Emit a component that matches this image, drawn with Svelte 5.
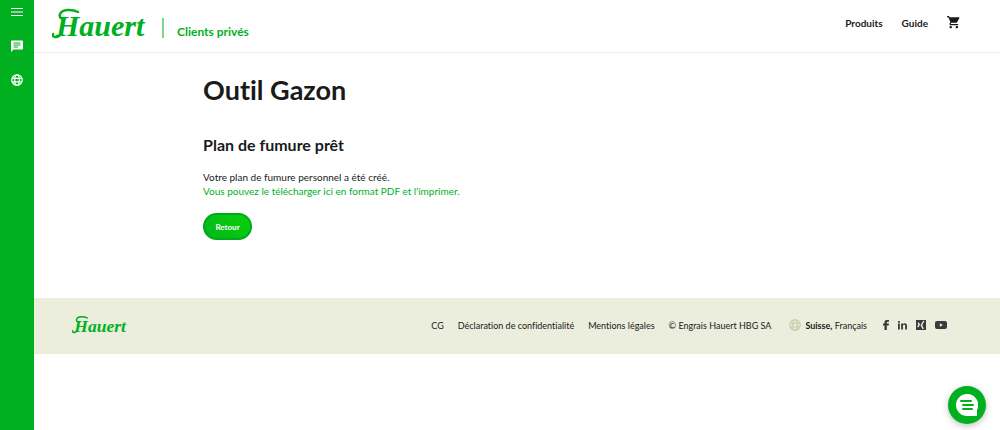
<script lang="ts">
  const footerLinks = ['CG', 'Déclaration de confidentialité', 'Mentions légales'];
</script>

{#snippet logo()}
  <svg viewBox="0 0 96 36" role="img" aria-label="Hauert">
    <text x="4" y="29" class="wordmark">Hauert</text>
    <path d="M26 5C20 2 10 2 8 7c-1 3 1 5 4 5M7 29c-3 2-7 1-6-2" fill="none" stroke="currentColor" stroke-width="2.500" stroke-linecap="round" />
  </svg>
{/snippet}

{#snippet globe()}
  <svg viewBox="0 0 24 24" aria-hidden="true" fill="none" stroke="currentColor" stroke-width="2.500">
    <circle cx="12" cy="12" r="10.5" />
    <ellipse cx="12" cy="12" rx="4.5" ry="10.5" />
    <path d="M2.500 8.500h19M2.500 15.500h19" />
  </svg>
{/snippet}

<div class="page">
  <aside class="sidebar">
    <button aria-label="Menu">
      <svg viewBox="0 0 12 12" fill="currentColor"><path d="M0 2h12v1H0zM0 5.500h12v1H0zM0 9h12v1H0z" /></svg>
    </button>
    <button aria-label="Messages">
      <svg viewBox="0 0 24 24" fill="currentColor"><path fill-rule="evenodd" d="M2 1h20c1 0 2 1 2 2v14c0 1-1 2-2 2H5l-5 5V3c0-1 1-2 2-2zm3 4v2h14V5zm0 4v2h14V9zm0 4v2h9v-2z" /></svg>
    </button>
    <button aria-label="Langue">{@render globe()}</button>
  </aside>

  <div class="main">
    <header>
      <a href="/" class="logo">{@render logo()}</a>
      <a href="/prives" class="segment">Clients privés</a>
      <nav>
        <a href="/produits">Produits</a>
        <a href="/guide">Guide</a>
        <a href="/panier" class="cart" aria-label="Panier">
          <svg viewBox="1 2 21 20" fill="currentColor"><path d="M7 18c-1.100 0-2 .9-2 2s.9 2 2 2 2-.9 2-2-.9-2-2-2zM1 2v2h2l3.600 7.600-1.350 2.450C4.520 15.370 5.480 17 7 17h12v-2H7.420c-.14 0-.25-.11-.25-.25l.03-.12.900-1.630h7.450c.75 0 1.410-.41 1.750-1.030l3.580-6.490A1 1 0 0 0 20 4H5.210l-.94-2H1zm16 16c-1.100 0-2 .9-2 2s.9 2 2 2 2-.9 2-2-.9-2-2-2z" /></svg>
        </a>
      </nav>
    </header>

    <main>
      <h1>Outil Gazon</h1>
      <h2>Plan de fumure prêt</h2>
      <p>
        Votre plan de fumure personnel a été créé.<br />
        <a href="/plan.pdf">Vous pouvez le télécharger ici en format PDF et l'imprimer.</a>
      </p>
      <button class="back">Retour</button>
    </main>

    <footer>
      <a href="/" class="logo small">{@render logo()}</a>
      <div class="links">
        {#each footerLinks as link}
          <a href="/info">{link}</a>
        {/each}
        <span>© Engrais Hauert HBG SA</span>
      </div>
      <a href="/langue" class="language">{@render globe()}<span><b>Suisse,</b> Français</span></a>
      <div class="social">
        <a href="/facebook" aria-label="Facebook">
          <svg width="6" height="10" viewBox="0 0 6 10" fill="currentColor"><path d="M1.500 10V5.500H0v-2h1.500V2.300C1.500.8 2.300 0 3.800 0H6v1.800H4.600c-.6 0-.8.3-.8.8v.9H6l-.3 2H3.800V10z" /></svg>
        </a>
        <a href="/linkedin" aria-label="LinkedIn">
          <svg width="9" height="10" viewBox="0 0 10 10" fill="currentColor"><path d="M0 3.300h2V10H0zM0 .6h2v1.800H0zM3.500 3.300h2v.9c.4-.7 1.100-1.100 2-1.100C9.300 3.100 10 4.300 10 6v4H8V6.300c0-.9-.3-1.500-1.100-1.500-.9 0-1.400.6-1.400 1.500V10h-2z" /></svg>
        </a>
        <a href="/xing" aria-label="Xing">
          <svg width="10" height="10" viewBox="0 0 10 10"><path fill="currentColor" d="M0 0h10v10H0z" /><path d="M2 2.800l1.300 1.700-1.600 2.600M7.800 1L5.300 5.200 7.300 8.800" fill="none" stroke="#ebeedd" stroke-width="1.400" /></svg>
        </a>
        <a href="/youtube" aria-label="YouTube">
          <svg width="12" height="10" viewBox="0 0 12 10"><rect y="1" width="12" height="8" rx="2" fill="currentColor" /><path d="M4.800 3.200v3.600L8 5z" fill="#ebeedd" /></svg>
        </a>
      </div>
    </footer>
  </div>

  <button class="chat" aria-label="Chat">
    <svg viewBox="0 0 22 22"><path d="M11 0a11 11 0 1 0 0 22h10v-6A11 11 0 0 0 11 0z" fill="#fff" /><path d="M5 7h10M7 11h10M7 15h9" stroke="#00b01e" stroke-width="2" stroke-linecap="round" /></svg>
  </button>
</div>

<style>
  :global(body) {
    margin: 0;
    background: #fff;
  }

  .page {
    display: flex;
    min-height: 100vh;
    font-family: Lato, "Open Sans", sans-serif;
    font-size: 10px;
    font-variant-ligatures: none;
    color: #1a1a1a;
  }

  a {
    color: inherit;
    text-decoration: none;
  }

  button {
    border: none;
    padding: 0;
    cursor: pointer;
    font-family: inherit;
  }

  svg {
    display: block;
  }

  .sidebar {
    flex: none;
    display: flex;
    flex-direction: column;
    align-items: center;
    gap: 22px;
    width: 34px;
    padding-top: 6px;
    box-sizing: border-box;
    background: #00b01e;
  }

  .sidebar button {
    width: 12px;
    height: 12px;
    background: none;
    color: #fff;
  }

  .main {
    flex: 1;
    min-width: 0;
  }

  header {
    display: flex;
    align-items: center;
    height: 53px;
    padding: 0 40px 0 18px;
    border-bottom: 1px solid #eee;
    box-sizing: border-box;
  }

  .logo {
    width: 96px;
    padding-bottom: 2px;
    color: #00b01e;
  }

  .logo.small {
    width: 56px;
    margin-right: auto;
    padding-bottom: 0;
  }

  .wordmark {
    font-family: "Liberation Serif", serif;
    font-size: 30px;
    font-style: italic;
    font-weight: 700;
    fill: currentColor;
  }

  .segment {
    margin: 4px 0 0 14px;
    padding: 8px 0 0 13px;
    border-left: 2px solid #7fd78e;
    color: #00b01e;
    font-size: 12px;
    font-weight: 700;
    line-height: 12px;
  }

  nav {
    display: flex;
    align-items: center;
    gap: 19px;
    margin-left: auto;
    padding-bottom: 7px;
    font-weight: 700;
    line-height: 14px;
  }

  .cart {
    width: 13px;
  }

  main {
    padding: 19px 17.5% 58px;
  }

  h1 {
    margin: 0;
    font-size: 27px;
    font-weight: 700;
    line-height: 36px;
  }

  h2 {
    margin: 26px 0 0;
    font-size: 16px;
    font-weight: 700;
    line-height: 22px;
  }

  p {
    margin: 14px 0 15px;
    line-height: 14px;
  }

  p a {
    color: #00b01e;
  }

  .back {
    width: 49px;
    height: 27px;
    border: 2px solid #00a81c;
    border-radius: 14px;
    background: linear-gradient(45deg, #00b81a, #0bd00b);
    color: #fff;
    font-size: 8px;
    font-weight: 700;
  }

  footer {
    display: flex;
    align-items: center;
    height: 56px;
    padding: 0 53px 2px 38px;
    box-sizing: border-box;
    background: #ebeedd;
    font-size: 9px;
  }

  .links {
    display: flex;
    gap: 14px;
  }

  .language {
    display: flex;
    align-items: center;
    gap: 4px;
    margin-left: 18px;
  }

  .language svg {
    width: 12px;
    color: #c9cfae;
  }

  .social {
    display: flex;
    gap: 9px;
    margin-left: 16px;
    color: #3a3a3a;
  }

  .chat {
    position: fixed;
    right: 14px;
    bottom: 6px;
    display: grid;
    place-items: center;
    width: 38px;
    height: 38px;
    border-radius: 50%;
    background: #00b01e;
    box-shadow: 0 2px 6px rgba(0, 0, 0, 0.25);
  }

  .chat svg {
    width: 22px;
  }
</style>
